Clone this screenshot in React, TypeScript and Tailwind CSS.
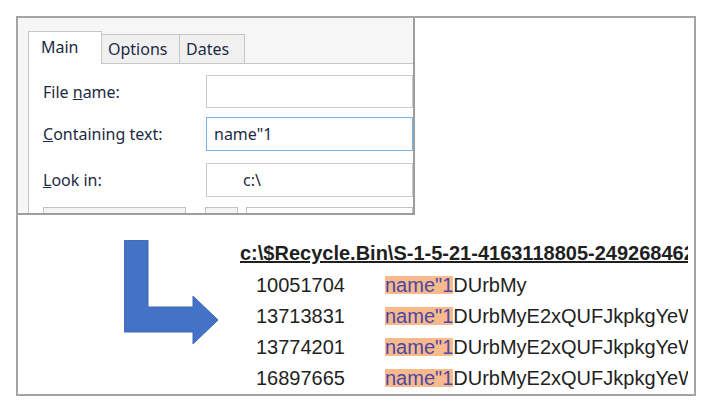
import React from 'react';

const rows = [
  { id: '10051704', rest: 'DUrbMy' },
  { id: '13713831', rest: 'DUrbMyE2xQUFJkpkgYeW' },
  { id: '13774201', rest: 'DUrbMyE2xQUFJkpkgYeW' },
  { id: '16897665', rest: 'DUrbMyE2xQUFJkpkgYeW' },
];

function Tab({ label, active, w }: { label: string; active?: boolean; w: string }) {
  if (active) {
    return (
      <div className={`relative z-10 -mb-px h-[33px] ${w} border border-b-0 border-[#c6c6c6] bg-white pl-[12px] pt-[3px] text-[16px] text-[#1e2a44]`}>
        {label}
      </div>
    );
  }
  return (
    <div className={`h-[29px] ${w} border border-b-0 border-l-0 border-[#c6c6c6] bg-[#f0f0f0] pl-[6px] pt-[2px] text-[16px] text-[#1e2a44]`}>
      {label}
    </div>
  );
}

function Field({ label, children, active, h = 'h-[34px]' }: { label: React.ReactNode; children?: React.ReactNode; active?: boolean; h?: string }) {
  return (
    <div className={`flex items-center ${h}`}>
      <div className="w-[163px] shrink-0 text-[16px] text-[#1e2a44]">{label}</div>
      <div
        className={`flex h-full flex-1 items-center border bg-white text-[16px] text-[#1e2a44] ${
          active ? 'border-[#7db3e8]' : 'border-[#cacaca]'
        }`}
      >
        {children}
      </div>
    </div>
  );
}

function ArrowIcon() {
  return (
    <svg width="95" height="105" viewBox="0 0 95 105">
      <polygon
        points="0,0 24,0 24,67 69,67 69,56 94,80 69,104 69,92 0,92"
        fill="#4472c4"
        stroke="#3f69b5"
        strokeWidth="1"
      />
    </svg>
  );
}

export default function App() {
  return (
    <div className="h-[408px] w-[709px] bg-white pl-[16px] pt-[16px]">
      <div className="flex h-[380px] w-[680px] flex-col overflow-hidden border-2 border-[#a4a4a4]">
        {/* Find dialog crop */}
        <div
          className="flex h-[197px] w-[397px] shrink-0 flex-col overflow-hidden border-b-2 border-r-2 border-[#9e9e9e] bg-[#f6f6f6] pl-[10px] pt-[13px]"
          style={{ fontFamily: '"Noto Sans", "Open Sans", sans-serif' }}
        >
          <div className="flex items-end">
            <Tab label="Main" active w="w-[74px]" />
            <Tab label="Options" w="w-[78px]" />
            <Tab label="Dates" w="w-[65px]" />
          </div>
          <div className="flex flex-1 flex-col border-l border-t border-[#c6c6c6] bg-white pl-[14px] pt-[11px]">
            <Field h="h-[33px]" label={<>File <span className="underline">n</span>ame:</>} />
            <div className="h-[9px]" />
            <Field active label={<><span className="underline">C</span>ontaining text:</>}>
              <span className="pl-[7px]">name"1</span>
            </Field>
            <div className="h-[12px]" />
            <Field label={<><span className="underline">L</span>ook in:</>}>
              <span className="pl-[36px]">c:\</span>
            </Field>
            <div className="flex pt-[10px]">
              <div className="h-[20px] w-[143px] border border-[#c2c2c2] bg-[#f4f4f4]" />
              <div className="ml-[19px] h-[20px] w-[33px] border border-[#c2c2c2] bg-[#f4f4f4]" />
              <div className="ml-[8px] h-[20px] flex-1 border border-[#c2c2c2] bg-white" />
            </div>
          </div>
        </div>

        {/* Result listing */}
        <div className="flex flex-1 bg-white">
          <div className="ml-[106px] mt-[25px]">
            <ArrowIcon />
          </div>
          <div
            className="ml-[21px] mt-[27px] w-[448px] overflow-hidden whitespace-nowrap text-[#1f1f1f]"
            style={{ fontFamily: '"Liberation Sans", Arial, sans-serif' }}
          >
            <div className="text-[20px] font-bold leading-[22px] underline">
              c:\$Recycle.Bin\S-1-5-21-4163118805-249268462
            </div>
            <div className="mt-[5px]">
              {rows.map((r) => (
                <div key={r.id} className="flex h-[31px] items-center text-[20px]">
                  <span className="w-[145px] shrink-0 pl-[16px]">{r.id}</span>
                  <span className="inline-block h-[18px] shrink-0 bg-[#f8ba8d] leading-[18px] text-[#4a47a6]">name"1</span>
                  <span>{r.rest}</span>
                </div>
              ))}
            </div>
          </div>
        </div>
      </div>
    </div>
  );
}
